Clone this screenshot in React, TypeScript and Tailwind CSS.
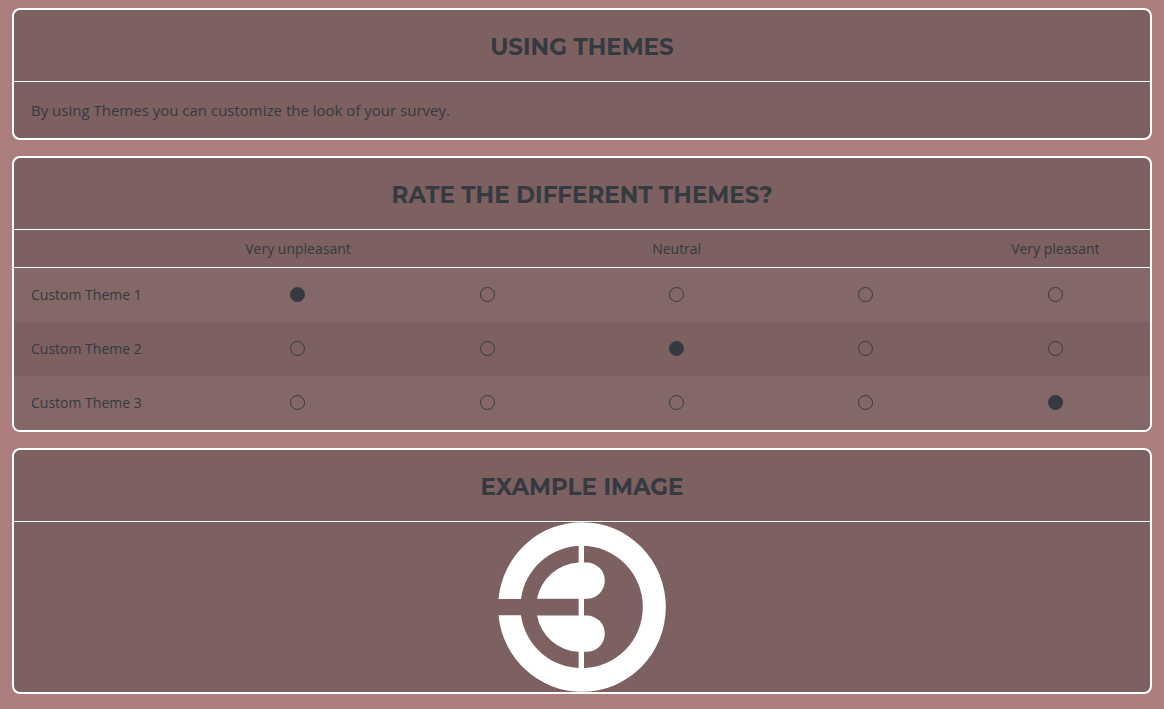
import { useState, type ReactNode } from "react";

const scale = ["Very unpleasant", "", "Neutral", "", "Very pleasant"];

const themes = [
  { name: "Custom Theme 1", initial: 0 },
  { name: "Custom Theme 2", initial: 2 },
  { name: "Custom Theme 3", initial: 4 },
];

function Card({ title, children }: { title: string; children: ReactNode }) {
  return (
    <section className="overflow-hidden rounded-lg border-2 border-white bg-[#7d6060]">
      <h2 className="border-b border-white pt-5 pb-4 text-center font-['Montserrat','Inter',sans-serif] text-[23px] leading-[35px] font-bold uppercase">
        {title}
      </h2>
      {children}
    </section>
  );
}

function RatingTable() {
  const [answers, setAnswers] = useState(themes.map((t) => t.initial));

  return (
    <table className="w-full table-fixed border-separate border-spacing-0">
      <thead>
        <tr>
          <td className="border-b border-white" />
          {scale.map((label, i) => (
            <th key={i} scope="col" className="h-[38px] border-b border-white p-0 text-center text-sm leading-6 font-normal">
              {label}
            </th>
          ))}
        </tr>
      </thead>
      <tbody>
        {themes.map((theme, row) => (
          <tr key={theme.name} className="h-[54px] odd:bg-[#836867]">
            <th scope="row" className="p-0 pl-[17px] text-left text-sm leading-6 font-normal">
              {theme.name}
            </th>
            {scale.map((label, col) => (
              <td key={col} className="p-0 pb-px text-center">
                <input
                  type="radio"
                  name={`theme-${row}`}
                  aria-label={`${theme.name}: ${label || col + 1}`}
                  checked={answers[row] === col}
                  onChange={() => setAnswers(answers.map((a, i) => (i === row ? col : a)))}
                  className="mx-auto block size-[15px] appearance-none rounded-full border border-[#343a40] checked:bg-[#343a40]"
                />
              </td>
            ))}
          </tr>
        ))}
      </tbody>
    </table>
  );
}

function Logo() {
  return (
    <svg viewBox="48 35.5 504 510" className="mx-auto block h-[170px] w-[168px]" fill="#fff" role="img" aria-label="Logo">
      <path
        fillRule="evenodd"
        d="M49.5 266.5A251.5 254.5 0 0 1 300 36A251.5 254.5 0 0 1 300 545A251.5 254.5 0 0 1 49.5 315H117A183 183.5 0 0 0 299.5 474A183 183.5 0 0 0 299.5 107A183 183.5 0 0 0 117 266.5Z"
      />
      <path d="M290 100H306V157H314A54.5 54.5 0 0 1 314 266H306V316H314A54.5 54.5 0 0 1 314 425H306V480H290V425A134 134 0 0 1 165 316H290V266H165A134 134 0 0 1 290 157Z" />
    </svg>
  );
}

export default function App() {
  return (
    <main className="flex min-h-screen flex-col gap-4 bg-[#ad7e7e] px-3 pt-2 pb-4 font-['Segoe_UI','Open_Sans',sans-serif] text-[#343a40]">
      <Card title="Using Themes">
        <p className="px-[17px] py-4 text-[15px] leading-6">By using Themes you can customize the look of your survey.</p>
      </Card>
      <Card title="Rate the different themes?">
        <RatingTable />
      </Card>
      <Card title="Example Image">
        <Logo />
      </Card>
    </main>
  );
}
